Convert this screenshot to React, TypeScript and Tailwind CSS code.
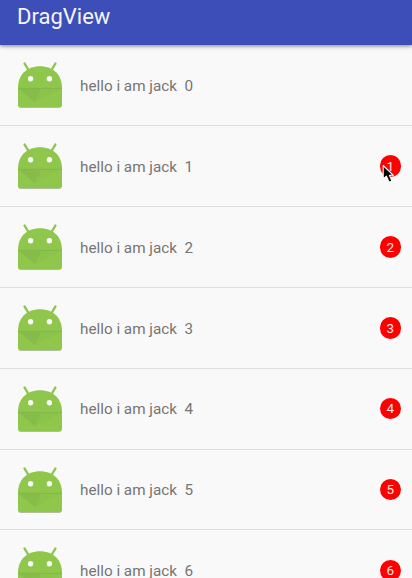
const rows = [0, 1, 2, 3, 4, 5, 6];

function AndroidIcon() {
  return (
    <svg viewBox="0 0 60 60" className="size-[60px] shrink-0" aria-hidden="true">
      <path d="M8.3 33 V50.5 Q8.3 53 10.8 53 H49 Q51.5 53 51.5 50.5 V33" fill="#b9bdb4" />
      <g stroke="#8fc552" strokeWidth="2.4" strokeLinecap="round">
        <path d="M14.6 8.6 L19.4 16.5" />
        <path d="M45.4 8.6 L40.6 16.5" />
      </g>
      <path
        d="M8 33 C8 20 16.5 11.3 30 11.3 C43.5 11.3 52 20 52 33 V49.6 Q52 52.2 49.4 52.2 H10.6 Q8 52.2 8 49.6 Z"
        fill="#8fc74c"
      />
      <path d="M8 33.2 H32 L25 47.2 Z" fill="#87bc4a" />
      <path d="M32 33.2 H52 L25 47.2 Z" fill="#8cc44b" />
      <path d="M8 33.4 H52" stroke="#82b548" strokeWidth="0.9" />
      <circle cx="20.6" cy="23.7" r="2.7" fill="#fafafa" />
      <circle cx="39.4" cy="23.7" r="2.7" fill="#fafafa" />
    </svg>
  );
}

function Pointer() {
  return (
    <svg viewBox="0 0 16 22" className="absolute top-[8.5px] left-[2px] h-[22px] w-4" aria-hidden="true">
      <path
        d="M1.2 1.5 V15 L4.4 12.2 L7.2 18.2 L10 17 L7.4 11.3 H11.4 Z"
        fill="#000"
        stroke="#fff"
        strokeWidth="1.1"
        strokeLinejoin="round"
      />
    </svg>
  );
}

export default function App() {
  return (
    <div className="flex h-[578px] w-[412px] flex-col overflow-hidden bg-[#f9f9f9] font-[Roboto,sans-serif]">
      <header className="z-10 flex h-[45px] shrink-0 items-start bg-[#3d4eb8] pl-[17px] shadow-[0_1px_4px_rgba(0,0,0,0.5)]">
        <h1 className="mt-[3px] text-[22px] leading-[27px] text-[#f4f5fb]">DragView</h1>
      </header>
      <ul className="pt-[0.4px]">
        {rows.map((n) => (
          <li key={n} className="flex h-[80.85px] items-center border-b border-[#dedede] pr-[11px] pl-[10px]">
            <AndroidIcon />
            <span className="ml-[10px] pt-[1.5px] text-[15.25px] leading-5 whitespace-pre text-[#757575]">{`hello i am jack  ${n}`}</span>
            {n > 0 && (
              <span className="relative ml-auto flex size-[21.5px] items-center justify-center rounded-full bg-[#fe0000] pt-px text-[13.5px] leading-none text-[#ffe5e5]">
                {n}
                {n === 1 && <Pointer />}
              </span>
            )}
          </li>
        ))}
      </ul>
    </div>
  );
}
